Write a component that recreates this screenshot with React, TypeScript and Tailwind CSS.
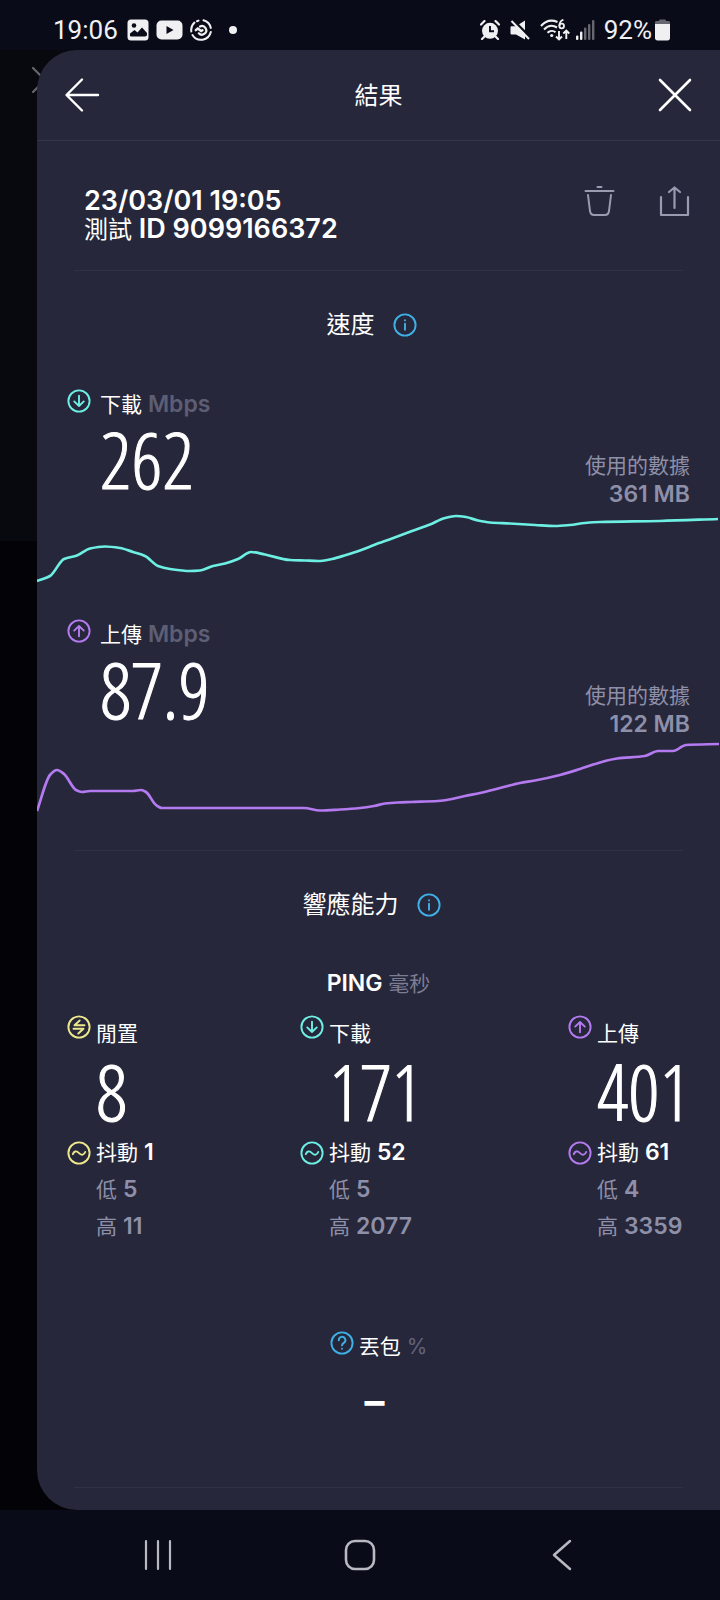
import React from 'react';

type IconProps = { className?: string };

const CircleIcon: React.FC<{ className?: string; children: React.ReactNode }> = ({ className, children }) => (
  <svg
    className={`w-6 h-6 shrink-0 ${className ?? ''}`}
    viewBox="0 0 24 24"
    fill="none"
    stroke="currentColor"
    strokeWidth="1.9"
    strokeLinecap="round"
    strokeLinejoin="round"
    aria-hidden="true"
  >
    <circle cx="12" cy="12" r="10.6" />
    {children}
  </svg>
);

const DownIcon = ({ className }: IconProps) => (
  <CircleIcon className={className}>
    <path d="M12 6.8v10.2M7.200 12.400l4.800 4.600 4.800-4.600" />
  </CircleIcon>
);

const UpIcon = ({ className }: IconProps) => (
  <CircleIcon className={className}>
    <path d="M12 17.200V7M7.200 11.600L12 7l4.800 4.600" />
  </CircleIcon>
);

const IdleIcon = ({ className }: IconProps) => (
  <CircleIcon className={className}>
    <path d="M17.500 10.200H7.500l5.200-4.700M6.500 13.800h10l-5.200 4.700" />
  </CircleIcon>
);

const JitterIcon = ({ className }: IconProps) => (
  <CircleIcon className={className}>
    <path d="M5.800 13.200c1.200-3 3.400-3.600 5.400-1.800l1.400 1.200c2.200 1.900 4.300 1.500 5.600-1.600" />
  </CircleIcon>
);

const InfoIcon = ({ className }: IconProps) => (
  <CircleIcon className={className}>
    <path d="M12 10.800v6M12 7.300v.1" />
  </CircleIcon>
);

const HelpIcon = ({ className }: IconProps) => (
  <CircleIcon className={className}>
    <path d="M8.800 9.200a3.300 3.300 0 1 1 5 2.700c-1.200.8-1.800 1.300-1.800 2.500M12 17.700v.1" />
  </CircleIcon>
);

const StatusBar = () => (
  <header className="h-[50px] shrink-0 flex items-center justify-between pl-[53px] pr-[50px] pt-[10px] text-[#f0f0f2] font-['Roboto',sans-serif] text-[26px] leading-7">
    <div className="flex items-center">
      <span>19:06</span>
      <svg className="ml-[9px] w-[22px] h-[22px]" viewBox="0 0 22 22" aria-hidden="true">
        <rect x="0.500" y="0.500" width="21" height="21" rx="3.500" fill="currentColor" />
        <circle cx="7" cy="6.500" r="2.300" fill="#0a0b18" />
        <path d="M3 17v-2.500l4.500-3.500 3 2.500 4.500-5 5 5.500v1.500c0 1.200-.8 2-2 2H4.500C3.600 17.500 3 17 3 17z" fill="#0a0b18" />
      </svg>
      <svg className="ml-[7px] w-[27px] h-5" viewBox="0 0 27 20" aria-hidden="true">
        <rect x="0.500" y="0.500" width="26" height="19" rx="5" fill="currentColor" />
        <path d="M10.500 6v8l7-4z" fill="#0a0b18" />
      </svg>
      <svg className="ml-[7px] w-[22px] h-[22px]" viewBox="0 0 22 22" fill="none" stroke="currentColor" strokeWidth="2" strokeLinecap="round" aria-hidden="true">
        <path d="M13.500 1.300A10 10 0 0 1 20.800 9M20.800 13A10 10 0 0 1 2.500 16M1.300 12.500A10 10 0 0 1 4.500 3.600M7 2.200l1.500-.6" />
        <path d="M10 7.500a4.300 4.300 0 1 1-1.200 6.800" strokeWidth="2.200" />
        <path d="M5.800 11.200l2-1.700 3.400 2.500 1.300-.7" strokeWidth="2.400" />
      </svg>
      <span className="ml-[17px] w-2 h-2 rounded-full bg-current" />
    </div>
    <div className="flex items-center">
      <svg className="w-5 h-5" viewBox="0 0 20 20" aria-hidden="true">
        <circle cx="10" cy="10.800" r="8" fill="currentColor" />
        <path d="M1 4.500L4.500 1M19 4.500L15.500 1M4.500 16.500L2 19M15.500 16.500L18 19" stroke="currentColor" strokeWidth="2.200" strokeLinecap="round" />
        <path d="M10 6v5.300h4" stroke="#0a0b18" strokeWidth="1.900" fill="none" />
      </svg>
      <svg className="ml-[10px] w-5 h-5" viewBox="0 0 20 20" aria-hidden="true">
        <path d="M0.500 7.500c0-.8.6-1.300 1.400-1.300H6L15 0.500v19L6 14.500H1.900c-.8 0-1.400-.5-1.400-1.300z" fill="currentColor" />
        <path d="M3 0l18 18" stroke="#0a0b18" strokeWidth="2.500" />
        <path d="M1.500 1l17.500 18" stroke="currentColor" strokeWidth="2" />
      </svg>
      <svg className="ml-[10px] w-[30px] h-[22px]" viewBox="0 0 30 22" fill="none" stroke="currentColor" strokeWidth="2.100" aria-hidden="true">
        <path d="M1 7C6 1.300 12 .6 17.500 3M4 10.500c4-4 9-4.500 13-2M7.500 13.800c2.500-2.300 6-2.300 8-.5" />
        <circle cx="11.700" cy="16.500" r="1.600" fill="currentColor" stroke="none" />
        <circle cx="21.700" cy="7" r="2.300" strokeWidth="1.800" />
        <path d="M19.400 7c0-3 1.400-5.300 4-6.300" strokeWidth="1.800" />
        <path d="M19 12v8.500M16 17.500l3 3 3-3M26.300 20v-8.500M23.300 14.500l3-3 3 3" strokeWidth="1.900" />
      </svg>
      <svg className="ml-[6px] w-[19px] h-5" viewBox="0 0 19 20" fill="currentColor" aria-hidden="true">
        <rect x="0" y="15.500" width="2.400" height="4.500" rx="1" />
        <rect x="4" y="11.500" width="2.400" height="8.500" rx="1" />
        <rect x="8" y="7.500" width="2.400" height="12.500" rx="1" opacity="0.400" />
        <rect x="12" y="4" width="2.400" height="16" rx="1" opacity="0.400" />
        <rect x="16" y="0" width="2.400" height="20" rx="1" opacity="0.400" />
      </svg>
      <span className="ml-[9px]">92%</span>
      <svg className="ml-[3px] w-[15px] h-[22px]" viewBox="0 0 15 22" fill="currentColor" aria-hidden="true">
        <path d="M4 2c0-1 .5-1.500 1.500-1.500h4c1 0 1.500.5 1.500 1.500h2.500c.8 0 1.500.6 1.500 1.400V5H0V3.400C0 2.600.7 2 1.500 2z" opacity="0.400" />
        <path d="M0 5h15v14c0 1.600-.9 2.500-2.500 2.500h-10C.9 21.500 0 20.600 0 19z" />
      </svg>
    </div>
  </header>
);

const Divider = () => <hr className="mx-[37px] border-0 h-px bg-[#303145]" />;

const SectionTitle: React.FC<{ title: string }> = ({ title }) => (
  <div className="flex items-center justify-center gap-[18px] pt-9 pr-[14px] text-2xl leading-9 text-white">
    <h2>{title}</h2>
    <button type="button" aria-label={`${title} 說明`} className="text-[#3fb0e6]">
      <InfoIcon />
    </button>
  </div>
);

const BigNumber: React.FC<{ value: string }> = ({ value }) => (
  <p className="pb-1 text-[78px] leading-[78px] font-light text-white whitespace-nowrap [-webkit-text-stroke:1px_white] font-['Open_Sans_Condensed_Light','Noto_Sans_ExtraCondensed_Light','Roboto_Condensed','Roboto',sans-serif]">
    {value}
  </p>
);

type SpeedProps = {
  label: string;
  value: string;
  used: string;
  icon: React.ReactNode;
  line: string;
  color: string;
};

const SpeedMetric: React.FC<SpeedProps> = ({ label, value, used, icon, line, color }) => (
  <section className="pb-[29px]">
    <div className="flex items-start gap-[9px] pl-[30px] h-8 leading-8 text-[21px]">
      <span className="pt-px">{icon}</span>
      <h3 className="text-white">
        {label} <span className="text-[23px] text-[#5d5e74] font-semibold">Mbps</span>
      </h3>
    </div>
    <div className="flex justify-between items-start pl-[63px] pr-[30px]">
      <BigNumber value={value} />
      <p className="pt-8 text-right text-[21px] leading-7 text-[#8e8fa8]">
        使用的數據
        <br />
        <span className="text-[23px] font-semibold">{used}</span>
      </p>
    </div>
    <svg className="block w-full h-20" viewBox="0 0 683 80" preserveAspectRatio="none" fill="none" aria-hidden="true">
      <path d={line} stroke={color} strokeWidth="2.700" strokeLinejoin="round" />
    </svg>
  </section>
);

// Slope-limited smoothing, so flat stretches stay flat
const toPath = (points: number[][]) => {
  const rise = (i: number) => (points[i + 1][1] - points[i][1]) / (points[i + 1][0] - points[i][0]);
  const slope = (i: number) => {
    if (i === 0) return rise(0);
    if (i === points.length - 1) return rise(i - 1);
    const left = rise(i - 1);
    const right = rise(i);
    return left * right <= 0 ? 0 : (2 * left * right) / (left + right);
  };
  return points.reduce((path, [x, y], i) => {
    if (i === 0) return `M${x} ${y}`;
    const [px, py] = points[i - 1];
    const third = (x - px) / 3;
    return `${path}C${px + third} ${py + slope(i - 1) * third} ${x - third} ${y - slope(i) * third} ${x} ${y}`;
  }, '');
};

const downloadPoints = [
  [0, 72], [13, 67], [27, 50], [40, 46.500], [53, 39.500], [68, 37.500], [83, 39], [96, 43], [108, 47], [121, 57], [133, 60],
  [153, 62], [163, 61.500], [176, 57], [188, 54.500], [201, 50], [214, 43], [228, 45.500], [253, 51], [268, 51.500], [281, 52],
  [295, 50], [309, 46], [323, 41.500], [337, 36], [355, 29.500], [375, 22], [393, 15.500], [408, 9], [419, 7], [429, 8],
  [441, 11.500], [453, 13.500], [473, 14.500], [498, 16], [518, 17], [533, 16], [548, 14], [563, 13], [623, 12], [681, 10],
];

const uploadPoints = [
  [0, 72], [13, 36], [20, 31], [27, 35], [39, 51], [45, 53], [53, 52], [96, 52], [104, 51], [109, 53], [119, 66],
  [125, 69], [200, 69], [267, 69], [283, 71.500], [303, 70.500], [323, 69], [337, 67], [348, 64.500], [361, 63.500], [374, 63],
  [401, 62], [415, 60], [428, 57], [443, 54], [463, 49], [483, 44], [498, 41.500], [523, 36], [543, 30], [563, 23.500],
  [580, 19.500], [608, 17], [621, 12], [636, 12], [649, 6], [682, 5],
];

type PingProps = {
  label: string;
  value: string;
  jitter: string;
  low: string;
  high: string;
  Icon: React.FC<IconProps>;
  tone: string;
};

const pings: PingProps[] = [
  { label: '閒置', value: '8', jitter: '1', low: '5', high: '11', Icon: IdleIcon, tone: 'text-[#eee88c]' },
  { label: '下載', value: '171', jitter: '52', low: '5', high: '2077', Icon: DownIcon, tone: 'text-[#6eefe3]' },
  { label: '上傳', value: '401', jitter: '61', low: '4', high: '3359', Icon: UpIcon, tone: 'text-[#b47af0]' },
];

const PingColumn: React.FC<PingProps> = ({ label, value, jitter, low, high, Icon, tone }) => (
  <div className="grid grid-cols-[auto_1fr] gap-x-[5px] text-[21px] leading-[37px] text-white">
    <Icon className={tone} />
    <h4>{label}</h4>
    <div className="col-start-2">
      <BigNumber value={value} />
    </div>
    <JitterIcon className={`mt-[7px] ${tone}`} />
    <p>
      抖動 <span className="text-[23px] font-semibold">{jitter}</span>
    </p>
    <p className="col-start-2 text-[#8e8fa8]">
      低 <span className="text-[23px] font-semibold">{low}</span>
    </p>
    <p className="col-start-2 text-[#8e8fa8]">
      高 <span className="text-[23px] font-semibold">{high}</span>
    </p>
  </div>
);

const NavBar = () => (
  <nav className="h-[90px] shrink-0 flex items-center justify-around px-[57px] text-[#b9b9c1]">
    <button type="button" aria-label="最近" className="p-2">
      <svg className="w-8 h-8" viewBox="0 0 32 32" stroke="currentColor" strokeWidth="2.200" strokeLinecap="round">
        <path d="M4 2v28M16 2v28M28 2v28" />
      </svg>
    </button>
    <button type="button" aria-label="主畫面" className="p-2">
      <svg className="w-8 h-8" viewBox="0 0 32 32" fill="none" stroke="currentColor" strokeWidth="2.600">
        <rect x="2" y="2" width="28" height="28" rx="9" />
      </svg>
    </button>
    <button type="button" aria-label="返回" className="p-2">
      <svg className="w-8 h-8" viewBox="0 0 32 32" fill="none" stroke="currentColor" strokeWidth="2.500" strokeLinecap="round" strokeLinejoin="round">
        <path d="M24 2L8 16l16 14" />
      </svg>
    </button>
  </nav>
);

const App: React.FC = () => {
  return (
    <div className="min-h-screen flex flex-col bg-[#0a0b18] font-['Inter','Noto_Sans_CJK_TC',sans-serif]">
      <StatusBar />

      <div className="relative flex-1 flex bg-[linear-gradient(#08080f_491px,#020207_491px)]">
        <svg className="absolute left-[31px] top-4 w-7 h-7 text-[#66666c]" viewBox="0 0 28 28" stroke="currentColor" strokeWidth="2.200" strokeLinecap="round" aria-hidden="true">
          <path d="M2 2l24 24M26 2L2 26" />
        </svg>

        <main className="relative flex-1 ml-[37px] rounded-l-[40px] bg-[#26273a]">
          <div className="h-[91px] flex items-center justify-between pl-[27px] pr-[27px] border-b border-[#35364a] text-white">
            <button type="button" aria-label="返回">
              <svg className="w-9 h-9" viewBox="0 0 36 36" fill="none" stroke="currentColor" strokeWidth="2.400" strokeLinecap="round" strokeLinejoin="round">
                <path d="M34 18H3M18 2.500L2.500 18 18 33.500" />
              </svg>
            </button>
            <h1 className="pt-[2px] text-2xl">結果</h1>
            <button type="button" aria-label="關閉">
              <svg className="w-9 h-9" viewBox="0 0 36 36" fill="none" stroke="currentColor" strokeWidth="2.600" strokeLinecap="round">
                <path d="M3 3l30 30M33 3L3 33" />
              </svg>
            </button>
          </div>

          <div className="flex items-start justify-between pl-[47px] pr-[29px] pt-[45px] pb-[26px]">
            <p className="pt-px text-[27px] leading-7 font-semibold text-white">
              23/03/01 19:05
              <br />
              <span className="text-2xl leading-7 font-normal">測試</span> ID 9099166372
            </p>
            <div className="flex gap-11 text-[#9a9ab0]">
              <button type="button" aria-label="刪除">
                <svg className="w-8 h-8" viewBox="0 0 32 32" fill="none" stroke="currentColor" strokeWidth="2" strokeLinecap="round">
                  <path d="M14.500 1h4M2.500 5h28M5 9l2 16c.4 2.700 1.500 4 4 4h11c2.500 0 3.600-1.300 4-4l2-16" />
                </svg>
              </button>
              <button type="button" aria-label="分享">
                <svg className="w-8 h-8" viewBox="0 0 32 32" fill="none" stroke="currentColor" strokeWidth="2.200" strokeLinecap="round" strokeLinejoin="round">
                  <path d="M2 11v18h27V11M15.500 22V2M10 6l5.500-4.500L21 6" />
                </svg>
              </button>
            </div>
          </div>
          <Divider />

          <SectionTitle title="速度" />
          <div className="pt-[45px] pb-[2px]">
            <SpeedMetric
              label="下載"
              value="262"
              used="361 MB"
              icon={<DownIcon className="text-[#6eefe3]" />}
              line={toPath(downloadPoints)}
              color="#6eefe3"
            />
            <SpeedMetric
              label="上傳"
              value="87.9"
              used="122 MB"
              icon={<UpIcon className="text-[#b47af0]" />}
              line={toPath(uploadPoints)}
              color="#b47af0"
            />
          </div>
          <Divider />

          <SectionTitle title="響應能力" />
          <h3 className="pt-11 text-center text-[23px] leading-8 font-semibold text-white">
            PING <span className="text-[21px] font-normal text-[#7c7d95]">毫秒</span>
          </h3>
          <div className="grid grid-cols-[minmax(0,233fr)_minmax(0,268fr)_minmax(0,122fr)] pt-[15px] pl-[30px] pr-[30px]">
            {pings.map((ping) => (
              <PingColumn key={ping.label} {...ping} />
            ))}
          </div>

          <div className="flex justify-center items-start gap-[5px] pt-[86px] text-[21px] leading-8 text-white">
            <HelpIcon className="text-[#3fb0e6]" />
            <h3>
              丟包 <span className="text-[#62637a]">%</span>
            </h3>
          </div>
          <p className="pt-4 pb-16 pr-2 text-center text-[40px] leading-[44px] font-bold text-white">–</p>
          <Divider />
          <div className="h-[22px]" />
        </main>
      </div>

      <NavBar />
    </div>
  );
};

export default App;
